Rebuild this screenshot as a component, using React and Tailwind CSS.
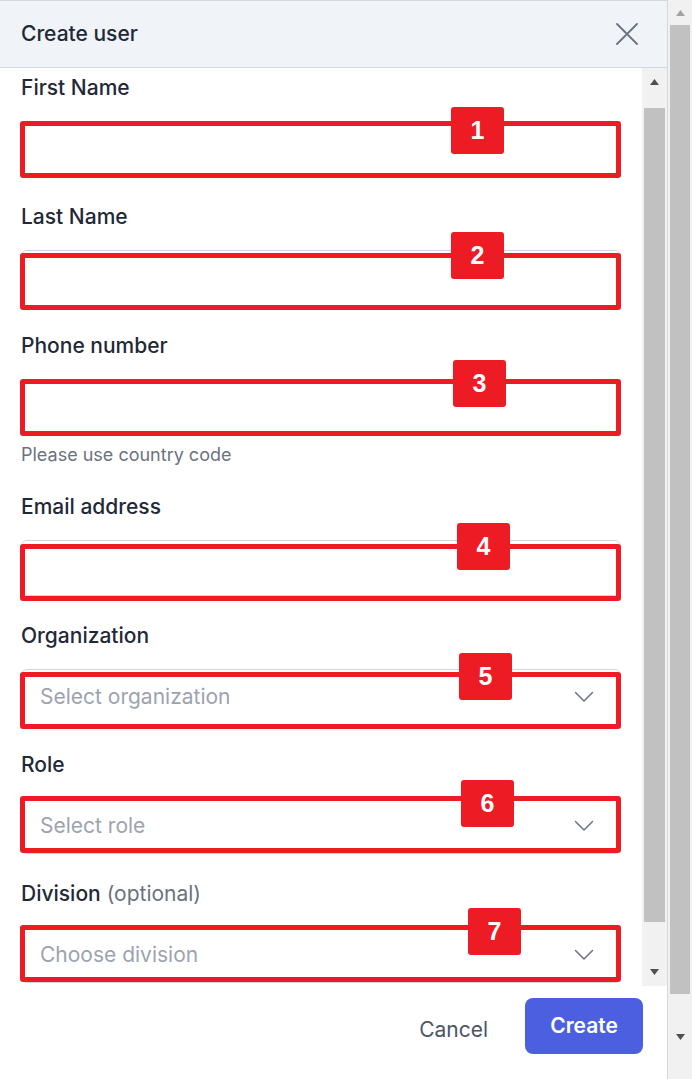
import React from "react"

const fields = [
  { label: "First Name", type: "input", red: "top-0", badge: "left-[430px] -top-[14px]", n: "1" },
  { label: "Last Name", type: "input", red: "top-[3px]", badge: "left-[430px] -top-[18px]", n: "2" },
  { label: "Phone number", type: "input", red: "top-0", badge: "left-[432px] -top-[19px]", n: "3", help: "Please use country code" },
  { label: "Email address", type: "input", red: "top-[4px]", badge: "left-[436px] -top-[17px]", n: "4" },
  { label: "Organization", type: "select", placeholder: "Select organization", red: "top-[3px]", badge: "left-[438px] -top-[16px]", n: "5" },
  { label: "Role", type: "select", placeholder: "Select role", red: "-top-[2px]", badge: "left-[440px] -top-[18px]", n: "6" },
  { label: "Division", optional: true, type: "select", placeholder: "Choose division", red: "-top-[2px]", badge: "left-[447px] -top-[19px]", n: "7" },
]

function Chevron() {
  return (
    <svg width="20" height="12" viewBox="0 0 20 12" fill="none">
      <polyline points="1.5,1.5 10,10 18.5,1.5" stroke="#6b7280" strokeWidth="1.5" strokeLinecap="round" strokeLinejoin="round" />
    </svg>
  )
}

function Arrow({ up, color }) {
  return (
    <svg width="9" height="6" viewBox="0 0 9 6">
      <polygon points={up ? "0,6 4.5,0 9,6" : "0,0 4.5,6 9,0"} fill={color} />
    </svg>
  )
}

function Field({ f }) {
  return (
    <div>
      <div className="h-7 leading-7 text-[21px] font-medium text-[#1f2937]">
        {f.label}
        {f.optional && <span className="font-normal text-[#6b7280]"> (optional)</span>}
      </div>
      <div className="relative mt-[19px] h-14">
        <div className="flex h-14 items-center justify-between rounded-md border border-[#d1d5db] bg-white pl-[18px] pr-[26px]">
          <span className="text-[21px] text-[#9ca3af]">{f.placeholder}</span>
          {f.type === "select" && <Chevron />}
        </div>
        {/* annotation overlay */}
        <div className={"absolute -left-px right-0 h-[57px] rounded-[3px] border-[5px] border-[#ed1c24] " + f.red}></div>
        <div className={"absolute flex h-[47px] w-[53px] items-center justify-center rounded-[3px] bg-[#ed1c24] font-['Liberation_Sans',Arial,sans-serif] text-[25px] font-bold text-white " + f.badge}>
          {f.n}
        </div>
      </div>
      {f.help && (
        <div className="mt-2 h-6 leading-6 text-[18px] text-[#6b7280]">{f.help}</div>
      )}
    </div>
  )
}

export default function App() {
  return (
    <div className="flex h-[1079px] w-[692px] overflow-hidden bg-white font-['Inter',sans-serif]">
      <div className="flex w-[668px] flex-col border-r border-t border-[#d4d7dc]">
        <div className="flex h-[67px] shrink-0 items-center justify-between border-b border-[#d4d7dc] bg-[#f0f3f8] pl-[21px] pr-[29px]">
          <h2 className="text-[21px] font-medium text-[#1f2937]">Create user</h2>
          <svg width="22" height="22" viewBox="0 0 22 22" fill="none">
            <path d="M1 1 L21 21 M21 1 L1 21" stroke="#6b7280" strokeWidth="1.8" strokeLinecap="round" />
          </svg>
        </div>

        <div className="flex h-[918px] shrink-0">
          <div className="flex flex-1 flex-col gap-[26px] overflow-hidden pl-[21px] pr-[21px] pt-[6px]">
            {fields.map((f, i) => (
              <Field key={i} f={f} />
            ))}
          </div>
          {/* inner scrollbar */}
          <div className="flex w-[25px] flex-col items-center bg-[#f1f1f1]">
            <div className="flex h-[26px] items-center justify-center pt-[1px]">
              <Arrow up color="#505050" />
            </div>
            <div className="mt-[14px] h-[814px] w-[21px] bg-[#c1c1c1]"></div>
            <div className="flex flex-1 items-center justify-center pt-[36px]">
              <Arrow color="#505050" />
            </div>
          </div>
        </div>

        <div className="flex items-start justify-end gap-[37px] pr-[24px] pt-[12px]">
          <button className="mt-[16px] text-[21px] text-[#4b5563]">Cancel</button>
          <button className="flex h-14 w-[118px] items-center justify-center rounded-lg bg-[#4c5fe0] text-[21px] font-semibold text-white">
            Create
          </button>
        </div>
      </div>

      {/* page scrollbar */}
      <div className="flex w-6 flex-col items-center bg-[#f1f1f1]">
        <div className="flex h-[25px] items-center justify-center">
          <Arrow up color="#a3a3a3" />
        </div>
        <div className="h-[969px] w-[20px] bg-[#c1c1c1]"></div>
        <div className="flex flex-1 items-center justify-center">
          <Arrow color="#505050" />
        </div>
      </div>
    </div>
  )
}
